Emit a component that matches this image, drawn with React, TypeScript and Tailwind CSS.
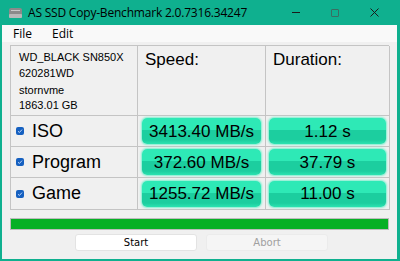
const rows = [
  { name: 'ISO', speed: '3413.40 MB/s', time: '1.12 s' },
  { name: 'Program', speed: '372.60 MB/s', time: '37.79 s' },
  { name: 'Game', speed: '1255.72 MB/s', time: '11.00 s' },
]

function Check() {
  return (
    <div className="w-[8px] h-[8px] rounded-[2px] bg-[#1560c0] flex items-center justify-center">
      <svg width="6" height="6" viewBox="0 0 6 6">
        <path d="M1 3.2 L2.4 4.5 L5 1.6" stroke="#cfe0ff" strokeWidth="0.9" fill="none" />
      </svg>
    </div>
  )
}

function Pill({ children }: { children: React.ReactNode }) {
  return (
    <div className="relative h-[26px] rounded-[5px] overflow-hidden shadow-[0_0_2px_1px_#7ff0d0] bg-[linear-gradient(to_bottom,#2ee9b6_0%,#2ee9b6_45%,#1cce9f_45%,#1cce9f_85%,#2be3b1_100%)] flex items-center justify-center text-[17px] text-black leading-none">
      {children}
    </div>
  )
}

export default function App() {
  return (
    <div className="w-[400px] h-[261px] bg-[#0fb08f] flex flex-col pl-[2px] pr-[3px] pb-[2px] font-['Liberation_Sans',Arial,sans-serif]">
      <div className="h-[25px] flex items-center text-[12px] text-black shrink-0">
        <svg width="16" height="12" viewBox="0 0 16 12" className="ml-[6px] mr-[4px]">
          <rect x="1" y="1" width="13" height="10" rx="2" fill="#8a8a8a" />
          <rect x="1" y="7" width="13" height="4" rx="1" fill="#b8b8b8" />
          <rect x="3" y="3" width="9" height="1" fill="#c9c9c9" />
        </svg>
        <span className="font-['Open_Sans',sans-serif] text-[12px] tracking-[-0.2px]">AS SSD Copy-Benchmark 2.0.7316.34247</span>
        <div className="ml-auto flex items-center h-full">
          <div className="w-[46px] flex justify-center">
            <div className="w-[8px] h-[1px] bg-[#1a1a1a]" />
          </div>
          <div className="w-[32px] flex justify-center">
            <div className="w-[8px] h-[8px] border border-[#3a6e62] rounded-[1px]" />
          </div>
          <div className="w-[46px] flex justify-center">
            <svg width="9" height="9" viewBox="0 0 9 9">
              <path d="M0.5 0.5 L8.5 8.5 M8.5 0.5 L0.5 8.5" stroke="#1a1a1a" strokeWidth="1" />
            </svg>
          </div>
        </div>
      </div>
      <div className="flex-1 bg-[#f0f0f0] flex flex-col">
        <div className="h-[17px] bg-[#f9f9f9] flex items-center text-[12px] font-['Open_Sans',sans-serif] text-black shrink-0">
          <span className="ml-[11px]">File</span>
          <span className="ml-[20px]">Edit</span>
        </div>
        <div className="ml-[8px] mt-[3px] w-[379px] border-l border-t border-[#c4c4c4] grid grid-cols-[127px_128px_124px] grid-rows-[70px_31px_31px_32px]">
          <div className="border-r border-b border-[#c4c4c4] pl-[8px] pt-[4px] text-[11px] leading-[15px] text-black">
            <div>WD_BLACK SN850X</div>
            <div className="mt-[1px]">620281WD</div>
            <div className="mt-[2px]">stornvme</div>
            <div>1863.01 GB</div>
          </div>
          <div className="border-r border-b border-[#c4c4c4] pl-[7px] pt-[1px] text-[17px] text-black">Speed:</div>
          <div className="border-r border-b border-[#c4c4c4] pl-[7px] pt-[1px] text-[17px] text-black">Duration:</div>
          {rows.map((r) => (
            <>
              <div key={r.name + 'a'} className="border-r border-b border-[#c4c4c4] flex items-center pl-[5px] gap-[8px] text-[18px] text-black">
                <Check />
                <span>{r.name}</span>
              </div>
              <div key={r.name + 'b'} className="border-r border-b border-[#c4c4c4] px-[4px] flex flex-col justify-center">
                <Pill>{r.speed}</Pill>
              </div>
              <div key={r.name + 'c'} className="border-r border-b border-[#c4c4c4] px-[3px] flex flex-col justify-center">
                <Pill>{r.time}</Pill>
              </div>
            </>
          ))}
        </div>
        <div className="ml-[8px] mt-[8px] w-[379px] h-[12px] border border-[#bcbcbc] bg-[#06b025]" />
        <div className="mt-[4px] flex gap-[9px] ml-[73px]">
          <div className="w-[122px] h-[17px] bg-white rounded-[3px] border border-[#e3e3e3] flex items-center justify-center text-[10px] text-black font-['DejaVu_Sans',sans-serif]">Start</div>
          <div className="w-[122px] h-[17px] bg-[#f5f5f5] rounded-[3px] border border-[#ebebeb] flex items-center justify-center text-[10px] text-[#a0a0a0] font-['DejaVu_Sans',sans-serif]">Abort</div>
        </div>
      </div>
    </div>
  )
}
